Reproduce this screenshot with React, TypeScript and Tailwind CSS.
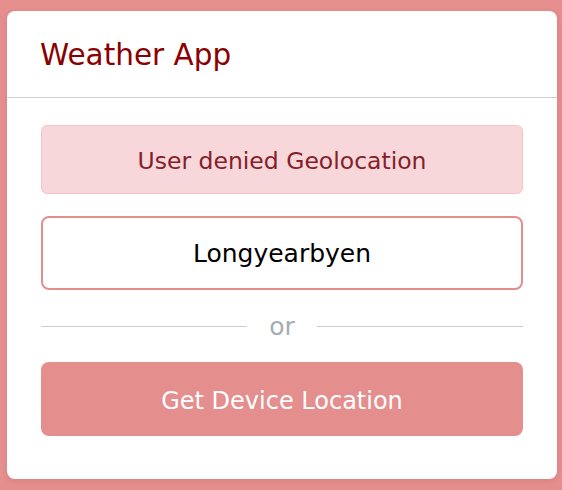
export default function App() {
  return (
    <div
      className="w-[562px] h-[490px] bg-[#e58e8e] overflow-hidden pt-[11px] pl-[7px]"
      style={{ fontFamily: '"DejaVu Sans", "Noto Sans", sans-serif' }}
    >
      <div className="w-[550px] h-[468px] bg-white rounded-lg shadow-[0_2px_6px_rgba(0,0,0,0.08)] flex flex-col">
        <div className="h-[87px] border-b border-[#cfcfcf] flex items-center px-[33px] pt-[4px]">
          <h1 className="text-[29.5px] leading-none text-[#8b0000]">Weather App</h1>
        </div>

        <div className="px-[34px] pt-[27px] flex flex-col">
          <div className="h-[69px] rounded-md bg-[#f8d7da] border border-[#f5c2c7] text-[#842029] flex items-center justify-center text-[23.5px] leading-none pt-[4px]">
            User denied Geolocation
          </div>

          <input
            className="mt-[22px] h-[74px] w-full rounded-lg border-2 border-[#e58e8e] text-center text-[25px] text-black outline-none"
            defaultValue="Longyearbyen"
          />

          <div className="mt-[23px] flex items-center h-[26px]">
            <div className="flex-1 h-px bg-[#cccccc]" />
            <span className="px-[22px] text-[25px] text-[#a7adb3] leading-none">or</span>
            <div className="flex-1 h-px bg-[#cccccc]" />
          </div>

          <button className="mt-[23px] h-[74px] w-full rounded-lg bg-[#e58e8e] text-white text-[24px] leading-none pt-[4px]">
            Get Device Location
          </button>
        </div>
      </div>
    </div>
  )
}
